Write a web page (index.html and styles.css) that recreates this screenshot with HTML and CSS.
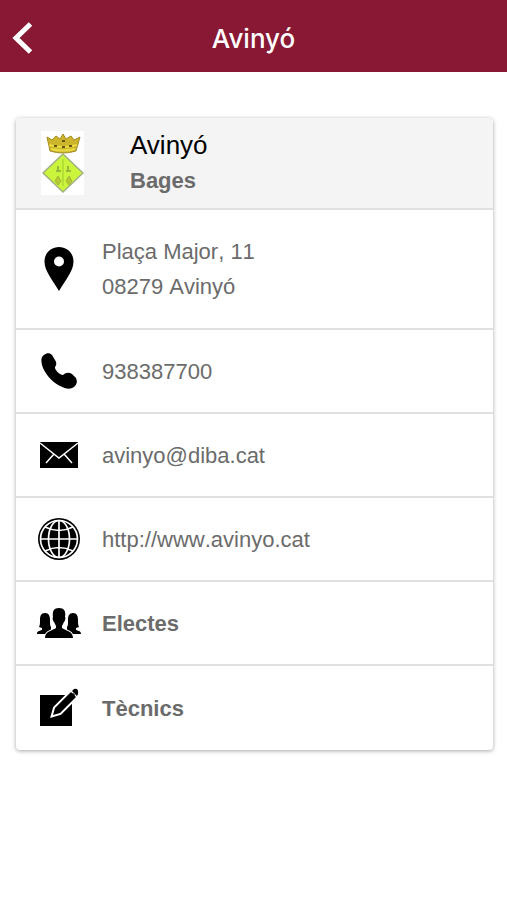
FILE: index.html
```
<!DOCTYPE html>
<html lang="ca">
<head>
    <meta charset="UTF-8">
    <meta name="viewport" content="width=device-width, initial-scale=1.0">
    <title>Avinyó</title>
    <link rel="stylesheet" href="styles.css">
</head>
<body>
    <header class="navbar">
        <button class="back-button" type="button" aria-label="Enrere">
            <svg width="24" height="34" viewBox="0 0 24 34"><path d="M18.5 3L4 17l14.5 14" fill="none" stroke="#fff" stroke-width="5"/></svg>
        </button>
        <h1>Avinyó</h1>
    </header>

    <main class="card">
        <!-- Municipi -->
        <div class="card-header">
            <svg class="shield" width="43" height="64" viewBox="0 0 43 64" role="img" aria-label="Escut d'Avinyó">
                <rect width="43" height="64" fill="#fff"/>
                <path d="M6 6l5 3 4-4 4 3 3-5 3 5 5-3 3 4 6-3-4 14q-13 4-26 0z" fill="#cdb52b" stroke="#a18b24"/>
                <path d="M8 14q14 4 28 0M10 18q12 3 24 0" fill="none" stroke="#e9dc43" stroke-width="2"/>
                <path d="M13 15h3M21 16h3M28 15h3M21 10h3" stroke="#665615" stroke-width="2"/>
                <path d="M22 23l20 19-20 19L2 42z" fill="#cbf53c" stroke="#a0b080" stroke-width="1.5"/>
                <path d="M22 28v27" stroke="#b4df38" stroke-width="2"/>
                <path d="M17 35v4M15 40h5M27 35v4M25 40h5" stroke="#94b83a" stroke-width="2"/>
                <path d="M17 45l3 5-3 4-3-4zM28 45l3 5-3 4-3-4z" fill="#b5c831" stroke="#a0b838"/>
            </svg>
            <div class="town">
                <h2>Avinyó</h2>
                <p>Bages</p>
            </div>
        </div>

        <!-- Dades de contacte -->
        <div class="row">
            <svg class="icon" viewBox="0 0 44 44"><path d="M22 0C14 0 7.5 6 7.5 14.5 7.5 24 15 32 22 44c7-12 14.5-20 14.5-29.5C36.5 6 30 0 22 0zm0 9.5a5 5 0 1 1 0 10 5 5 0 0 1 0-10z" fill-rule="evenodd"/></svg>
            <address>Plaça Major, 11<br>08279 Avinyó</address>
        </div>
        <a class="row" href="tel:938387700">
            <svg class="icon" viewBox="0 0 44 44"><path d="M7 6c3-2.500 6-2 8 0l3 5c2 3 1.500 5 0 7-.5 3 5 8 8 8 3-2.500 6-3 9-1l4 4c1.500 3 1 6-1 8-4 4-9 3-15 0C15 33 7 24 5 16 4 11 4 8 7 6z"/></svg>
            <span>938387700</span>
        </a>
        <a class="row" href="mailto:avinyo@diba.cat">
            <svg class="icon" viewBox="0 0 44 44"><path d="M3 9h38v26H3z"/><path d="M3 10l19 15 19-15M9 30l8-9M35 30l-8-9" fill="none" stroke="#fff" stroke-width="1.5"/></svg>
            <span>avinyo@diba.cat</span>
        </a>
        <a class="row" href="http://www.avinyo.cat">
            <svg class="icon" viewBox="0 0 44 44"><circle cx="22" cy="22" r="21"/><g fill="none" stroke="#fff" stroke-width="1.7"><circle cx="22" cy="22" r="18.5"/><ellipse cx="22" cy="22" rx="10.5" ry="18.5"/><path d="M22 3.5v37M3.5 22h37M8 10q14 7 28 0M8 34q14-7 28 0"/></g></svg>
            <span>http://www.avinyo.cat</span>
        </a>
        <a class="row strong" href="#electes">
            <svg class="icon" viewBox="0 0 44 44">
                <path d="M8 12c-4 0-5 3-5 7 0 3 0 5-1 7l3 1v2c-3 1-5 1-5 4h14V26c-1-1-1-3-1-7 0-4-1-7-5-7z"/>
                <path d="M36 12c4 0 5 3 5 7 0 3 0 5 1 7l-3 1v2c3 1 5 1 5 4H30V26c1-1 1-3 1-7 0-4 1-7 5-7z"/>
                <path d="M22 7c-5 0-7 3-6 9-1 1 0 4 1 5l2 4v2c-4 3-11 3-11 10h28c0-7-7-7-11-10v-2l2-4c1-1 2-4 1-5 1-6-1-9-6-9z" stroke="#fff" stroke-width="2" paint-order="stroke"/>
            </svg>
            <span>Electes</span>
        </a>
        <a class="row strong" href="#tecnics">
            <svg class="icon" viewBox="0 0 44 44"><path d="M3 9h32v31H3z"/><path d="M16 29l2-7L36 4l5 5-18 18z" stroke="#fff" stroke-width="4"/><path d="M16 29l2-7L34 6l5 5-16 16zM35 5l2-2q5-1 4 5l-1 2z"/></svg>
            <span>Tècnics</span>
        </a>
    </main>
</body>
</html>
```
FILE: styles.css
```
* {
    box-sizing: border-box;
}

body {
    margin: 0;
    background-color: #fff;
    font-family: "Liberation Sans", Arial, sans-serif;
    font-size: 22px;
    color: #6b6b6b;
}

h1, h2, p {
    margin: 0;
}

/* Barra superior */
.navbar {
    display: grid;
    grid-template-columns: 48px 1fr 48px;
    align-items: center;
    height: 72px;
    padding-top: 4px;
    background-color: #881833;
    color: #fff;
}

.navbar h1 {
    font-family: Inter, sans-serif;
    font-size: 26px;
    font-weight: 500;
    text-align: center;
}

.back-button {
    display: flex;
    padding: 0 0 0 12px;
    background: none;
    border: none;
    cursor: pointer;
}

.card {
    margin: 46px 14px 24px 16px;
    border-radius: 4px;
    overflow: hidden;
    box-shadow: 0 1px 4px rgba(0, 0, 0, 0.35);
}

.card-header {
    display: flex;
    align-items: center;
    gap: 46px;
    height: 92px;
    padding: 0 25px;
    background-color: #f4f4f4;
    border-bottom: 2px solid #e0e0e0;
}

.town h2 {
    font-size: 26px;
    font-weight: normal;
    line-height: 35px;
    color: #000;
}

.town p {
    font-weight: bold;
    line-height: 35px;
}

/* Files de contacte */
.row {
    display: flex;
    align-items: center;
    gap: 21px;
    min-height: 84px;
    padding: 19px 21px;
    border-bottom: 2px solid #e0e0e0;
    line-height: 35px;
    color: inherit;
    text-decoration: none;
    font-kerning: none;
}

.row:last-child {
    border-bottom: none;
}

.row address {
    padding: 5px 0;
    font-style: normal;
}

.strong {
    font-weight: bold;
}

.icon {
    flex: none;
    width: 44px;
    height: 44px;
}
```
